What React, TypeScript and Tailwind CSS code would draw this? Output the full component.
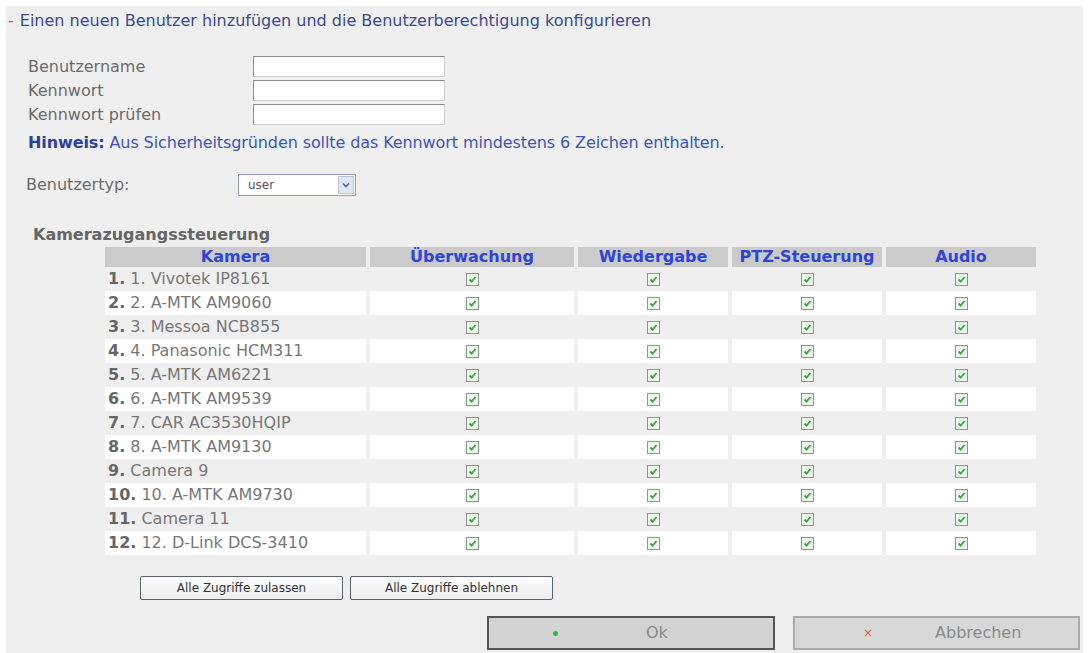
import React from "react";

const cams = [
  ["1.", "1. Vivotek IP8161"],
  ["2.", "2. A-MTK AM9060"],
  ["3.", "3. Messoa NCB855"],
  ["4.", "4. Panasonic HCM311"],
  ["5.", "5. A-MTK AM6221"],
  ["6.", "6. A-MTK AM9539"],
  ["7.", "7. CAR AC3530HQIP"],
  ["8.", "8. A-MTK AM9130"],
  ["9.", "Camera 9"],
  ["10.", "10. A-MTK AM9730"],
  ["11.", "Camera 11"],
  ["12.", "12. D-Link DCS-3410"],
];

function Check() {
  return (
    <span className="inline-flex w-[13px] h-[13px] border border-[#8a9a8a] bg-[#eef7ee] items-center justify-center align-middle">
      <svg width="9" height="9" viewBox="0 0 9 9">
        <path d="M1.5 4.5 L3.6 6.6 L7.5 2" stroke="#3aa83a" strokeWidth="1.8" fill="none" />
      </svg>
    </span>
  );
}

const inputCls = "h-[21px] bg-white border border-[#8f8f8f] border-b-[#cfcfcf] border-r-[#cfcfcf]";

export default function App() {
  return (
    <div className="w-[1090px] h-[653px] bg-white overflow-hidden" style={{ fontFamily: "'DejaVu Sans', sans-serif" }}>
      <div className="ml-[6px] mt-[6px] w-[1077px] h-[647px] bg-[#efefef] text-[#6b6b6b] flex flex-col items-start">
        <div className="pt-[6px] pl-[2px] text-[16px] leading-[18px] text-[#3b4a92]">
          <span className="text-[#e05050] mr-[6px]">-</span>
          Einen neuen Benutzer hinzufügen und die Benutzerberechtigung konfigurieren
        </div>

        <div className="mt-[26px] ml-[22px] grid grid-cols-[225px_192px] gap-y-[3px] text-[16px]">
          <div className="leading-[21px]">Benutzername</div>
          <div className={inputCls} />
          <div className="leading-[21px]">Kennwort</div>
          <div className={inputCls} />
          <div className="leading-[21px]">Kennwort prüfen</div>
          <div className={inputCls} />
        </div>

        <div className="ml-[22px] mt-[8px] text-[16px] leading-[20px] text-[#3a55c0] tracking-[-0.1px]">
          <span className="font-bold text-[#2b3f9e]">Hinweis:</span> Aus Sicherheitsgründen sollte das Kennwort mindestens 6 Zeichen enthalten.
        </div>

        <div className="mt-[20px] ml-[20px] flex items-center text-[16px]">
          <div className="w-[212px]">Benutzertyp:</div>
          <div className="w-[118px] h-[22px] bg-white border border-[#8aa0b8] flex items-center justify-between pl-[9px] pr-[1px]">
            <span className="text-[12px] text-[#555]">user</span>
            <span className="w-[16px] h-[18px] bg-[#dde6f3] border border-[#b5c5dc] flex items-center justify-center">
              <svg width="8" height="6" viewBox="0 0 8 6">
                <path d="M1 1.5 L4 4.5 L7 1.5" stroke="#4a6aa8" strokeWidth="1.6" fill="none" />
              </svg>
            </span>
          </div>
        </div>

        <div className="mt-[29px] ml-[27px] text-[16px] leading-[18px] font-bold text-[#666]">
          Kamerazugangssteuerung
        </div>

        <table className="ml-[95px] mt-[3px] w-[939px] border-separate border-spacing-x-[4px] border-spacing-y-[0px]" style={{ tableLayout: "fixed" }}>
          <colgroup>
            <col className="w-[261px]" />
            <col className="w-[204px]" />
            <col className="w-[150px]" />
            <col className="w-[150px]" />
            <col className="w-[150px]" />
          </colgroup>
          <thead>
            <tr className="bg-[#cbcbcb] text-[#2e45d6] text-[16px] font-bold">
              {["Kamera", "Überwachung", "Wiedergabe", "PTZ-Steuerung", "Audio"].map((h) => (
                <th key={h} className="h-[20px] leading-[20px] p-0 text-center">{h}</th>
              ))}
            </tr>
          </thead>
          <tbody>
            {cams.map(([n, name], i) => (
              <tr key={n} className={i % 2 === 1 ? "bg-white" : "bg-[#efefef]"}>
                <td className="h-[24px] p-0 pl-[3px] text-[16px] leading-[20px] whitespace-nowrap">
                  <span className="font-bold text-[#666]">{n}</span> <span className="text-[#777]">{name}</span>
                </td>
                {[0, 1, 2, 3].map((k) => (
                  <td key={k} className="p-0 text-center leading-[20px]">
                    <Check />
                  </td>
                ))}
              </tr>
            ))}
          </tbody>
        </table>

        <div className="mt-[21px] ml-[134px] flex gap-[7px]">
          {["Alle Zugriffe zulassen", "Alle Zugriffe ablehnen"].map((t) => (
            <button key={t} className="w-[203px] h-[24px] bg-gradient-to-b from-white to-[#ececec] border border-[#5a6470] rounded-[2px] text-[12px] text-[#333]">
              {t}
            </button>
          ))}
        </div>

        <div className="mt-[16px] ml-[481px] flex gap-[18px]">
          <button className="w-[288px] h-[34px] bg-[#d3d3d3] border-2 border-[#555] flex items-center text-[16px] text-[#8a8a8a]">
            <span className="ml-[64px] w-[5px] h-[5px] rounded-full bg-[#2fb84a]" />
            <span className="ml-[88px]">Ok</span>
          </button>
          <button className="w-[287px] h-[34px] bg-[#d8d8d8] border-2 border-[#aaa] flex items-center text-[16px] text-[#8a8a8a]">
            <span className="ml-[68px] text-[12px] text-[#e06040]">×</span>
            <span className="ml-[62px]">Abbrechen</span>
          </button>
        </div>
      </div>
    </div>
  );
}
